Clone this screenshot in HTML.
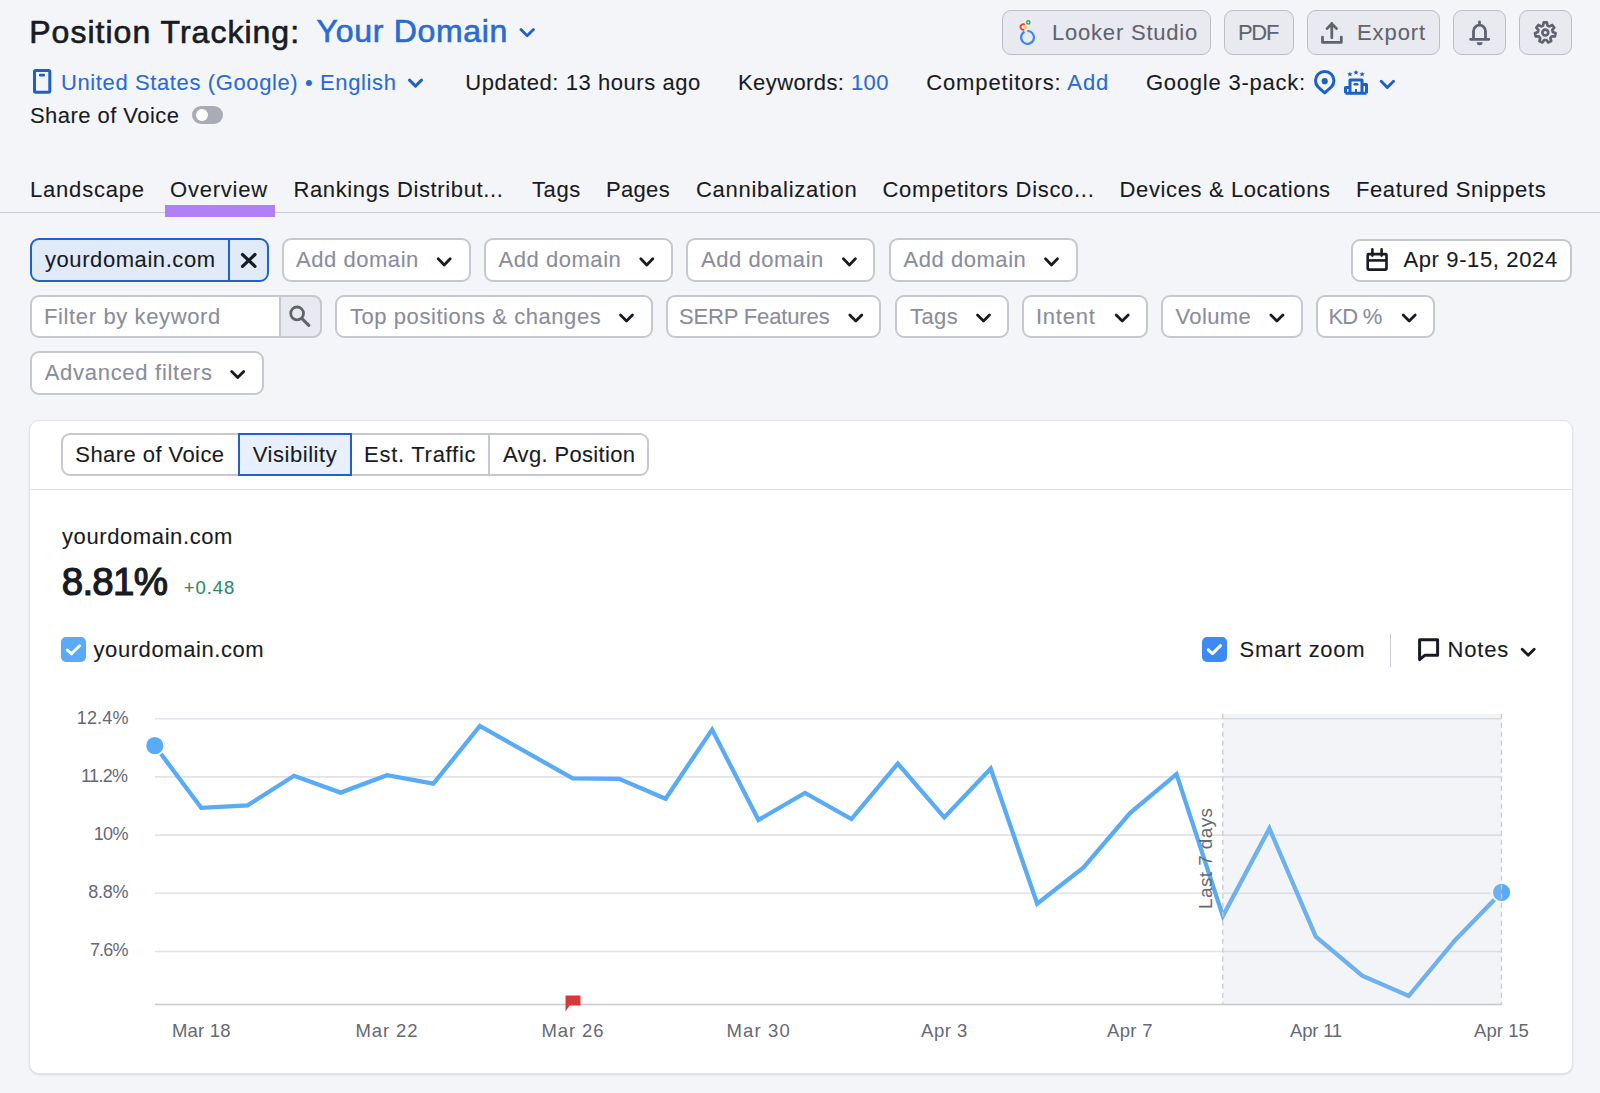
<!DOCTYPE html>
<html><head><meta charset="utf-8"><style>
html,body{margin:0;padding:0}
body{width:1600px;height:1093px;overflow:hidden;position:relative;background:#f4f5f9;font-family:"Liberation Sans",sans-serif}
.t{position:absolute;white-space:pre;line-height:1;-webkit-text-stroke:0.1px currentColor}
.b{position:absolute;box-sizing:border-box}
svg{position:absolute;left:0;top:0;overflow:visible}
</style></head><body>

<div class="b" style="left:1001.8px;top:10.3px;width:209.4px;height:44.7px;background:#e9eaef;border:1.8px solid #bcbec6;border-radius:9px"></div>
<div class="b" style="left:1223.9px;top:10.3px;width:70.2px;height:44.7px;background:#e9eaef;border:1.8px solid #bcbec6;border-radius:9px"></div>
<div class="b" style="left:1306.6px;top:10.3px;width:133.7px;height:44.7px;background:#e9eaef;border:1.8px solid #bcbec6;border-radius:9px"></div>
<div class="b" style="left:1452.8px;top:10.3px;width:53.2px;height:44.7px;background:#e9eaef;border:1.8px solid #bcbec6;border-radius:9px"></div>
<div class="b" style="left:1518.6px;top:10.3px;width:53.2px;height:44.7px;background:#e9eaef;border:1.8px solid #bcbec6;border-radius:9px"></div>
<div class="b" style="left:192.4px;top:106px;width:31.0px;height:18px;background:#a9abb6;border-radius:9px"></div>
<div class="b" style="left:195.5px;top:109px;width:12.0px;height:12px;background:#fff;border-radius:50%"></div>
<div class="b" style="left:0.0px;top:211.6px;width:1600.0px;height:1.4px;background:#c9cbd2"></div>
<div class="b" style="left:164.9px;top:205.3px;width:109.8px;height:11.4px;background:#b17ff6"></div>
<div class="b" style="left:30.0px;top:238.2px;width:239.1px;height:44.0px;background:#e1eaf9;border:2px solid #1f62ca;border-radius:9px"></div>
<div class="b" style="left:228.2px;top:238.2px;width:1.7px;height:44.0px;background:#1f62ca"></div>
<div class="b" style="left:281.9px;top:238.4px;width:189.1px;height:43.8px;background:#fff;border:2px solid #c6c8cf;border-radius:9px"></div>
<div class="b" style="left:483.5px;top:238.4px;width:189.1px;height:43.8px;background:#fff;border:2px solid #c6c8cf;border-radius:9px"></div>
<div class="b" style="left:686.2px;top:238.4px;width:189.1px;height:43.8px;background:#fff;border:2px solid #c6c8cf;border-radius:9px"></div>
<div class="b" style="left:888.8px;top:238.4px;width:189.1px;height:43.8px;background:#fff;border:2px solid #c6c8cf;border-radius:9px"></div>
<div class="b" style="left:1350.6px;top:238.5px;width:221.4px;height:43.8px;background:#fff;border:2px solid #c6c8cf;border-radius:9px"></div>
<div class="b" style="left:30.0px;top:294.6px;width:291.8px;height:43.8px;background:#fff;border:2px solid #c6c8cf;border-radius:9px"></div>
<div class="b" style="left:279.0px;top:294.6px;width:42.8px;height:43.8px;background:#e9eaef;border:2px solid #c6c8cf;border-radius:0 9px 9px 0"></div>
<div class="b" style="left:334.8px;top:294.7px;width:318.0px;height:43.7px;background:#fff;border:2px solid #c6c8cf;border-radius:9px"></div>
<div class="b" style="left:665.7px;top:294.7px;width:215.7px;height:43.7px;background:#fff;border:2px solid #c6c8cf;border-radius:9px"></div>
<div class="b" style="left:894.8px;top:294.7px;width:114.3px;height:43.7px;background:#fff;border:2px solid #c6c8cf;border-radius:9px"></div>
<div class="b" style="left:1022.0px;top:294.7px;width:125.5px;height:43.7px;background:#fff;border:2px solid #c6c8cf;border-radius:9px"></div>
<div class="b" style="left:1161.2px;top:294.7px;width:141.5px;height:43.7px;background:#fff;border:2px solid #c6c8cf;border-radius:9px"></div>
<div class="b" style="left:1315.6px;top:294.7px;width:119.3px;height:43.7px;background:#fff;border:2px solid #c6c8cf;border-radius:9px"></div>
<div class="b" style="left:29.8px;top:350.6px;width:234.3px;height:44.3px;background:#fff;border:2px solid #c6c8cf;border-radius:9px"></div>
<div class="b" style="left:29.0px;top:419.7px;width:1543.7px;height:654.5px;background:#fff;border:1px solid #e2e3e8;border-radius:10px;box-shadow:0 1px 2px rgba(25,27,35,0.12)"></div>
<div class="b" style="left:30.0px;top:488.8px;width:1541.7px;height:1.5px;background:#e2e3e8"></div>
<div class="b" style="left:61.2px;top:432.6px;width:587.6px;height:43.6px;background:#fff;border:2px solid #c6c8cf;border-radius:9px"></div>
<div class="b" style="left:487.6px;top:432.6px;width:2.0px;height:43.6px;background:#c6c8cf"></div>
<div class="b" style="left:238.0px;top:432.6px;width:113.8px;height:43.6px;background:#e8f0fd;border:2px solid #1f62ca"></div>
<div class="b" style="left:1389.7px;top:634px;width:1.5px;height:32.8px;background:#c9cbd2"></div>
<div class="b" style="left:61.0px;top:637.3px;width:25.0px;height:24.7px;background:#5aabf5;border-radius:5px"></div>
<div class="b" style="left:1202.0px;top:637.2px;width:24.7px;height:24.5px;background:#3d8af7;border-radius:5px"></div>
<div class="t" style="left:29.25px;top:15.5px;font-size:32px;font-weight:400;letter-spacing:1.015px;color:#191b23;-webkit-text-stroke:0.65px currentColor;">Position Tracking:</div>
<div class="t" style="left:316.6px;top:15.4px;font-size:32px;font-weight:400;letter-spacing:0.7px;color:#2a6bd1;-webkit-text-stroke:0.65px currentColor;">Your Domain</div>
<div class="t" style="left:61.0px;top:71.6px;font-size:22px;font-weight:400;letter-spacing:0.613px;color:#2a6bd1;">United States (Google) • English</div>
<div class="t" style="left:465.3px;top:71.6px;font-size:22px;font-weight:400;letter-spacing:0.555px;color:#191b23;">Updated: 13 hours ago</div>
<div class="t" style="left:738.0px;top:71.6px;font-size:22px;font-weight:400;letter-spacing:0.408px;color:#191b23;">Keywords: <span style="color:#2a6bd1">100</span></div>
<div class="t" style="left:926.2px;top:71.6px;font-size:22px;font-weight:400;letter-spacing:0.887px;color:#191b23;">Competitors: <span style="color:#2a6bd1">Add</span></div>
<div class="t" style="left:1145.9px;top:71.6px;font-size:22px;font-weight:400;letter-spacing:0.777px;color:#191b23;">Google 3-pack:</div>
<div class="t" style="left:30.0px;top:104.5px;font-size:22px;font-weight:400;letter-spacing:0.446px;color:#191b23;">Share of Voice</div>
<div class="t" style="left:30.0px;top:178.9px;font-size:22px;font-weight:400;letter-spacing:0.8px;color:#191b23;">Landscape</div>
<div class="t" style="left:170.0px;top:178.9px;font-size:22px;font-weight:400;letter-spacing:0.786px;color:#191b23;">Overview</div>
<div class="t" style="left:293.4px;top:178.9px;font-size:22px;font-weight:400;letter-spacing:0.63px;color:#191b23;">Rankings Distribut...</div>
<div class="t" style="left:532.0px;top:178.9px;font-size:22px;font-weight:400;letter-spacing:0.6px;color:#191b23;">Tags</div>
<div class="t" style="left:606.0px;top:178.9px;font-size:22px;font-weight:400;letter-spacing:0.325px;color:#191b23;">Pages</div>
<div class="t" style="left:695.9px;top:178.9px;font-size:22px;font-weight:400;letter-spacing:0.75px;color:#191b23;">Cannibalization</div>
<div class="t" style="left:882.5px;top:178.9px;font-size:22px;font-weight:400;letter-spacing:0.695px;color:#191b23;">Competitors Disco...</div>
<div class="t" style="left:1119.6px;top:178.9px;font-size:22px;font-weight:400;letter-spacing:0.617px;color:#191b23;">Devices &amp; Locations</div>
<div class="t" style="left:1355.9px;top:178.9px;font-size:22px;font-weight:400;letter-spacing:0.625px;color:#191b23;">Featured Snippets</div>
<div class="t" style="left:1052.0px;top:21.9px;font-size:22px;font-weight:400;letter-spacing:0.792px;color:#5f6370;">Looker Studio</div>
<div class="t" style="left:1238.0px;top:21.9px;font-size:22px;font-weight:400;letter-spacing:-1.3px;color:#5f6370;">PDF</div>
<div class="t" style="left:1357.0px;top:21.9px;font-size:22px;font-weight:400;letter-spacing:0.92px;color:#5f6370;">Export</div>
<div class="t" style="left:45.0px;top:249.3px;font-size:22px;font-weight:400;letter-spacing:0.569px;color:#191b23;">yourdomain.com</div>
<div class="t" style="left:296.0px;top:249.1px;font-size:22px;font-weight:400;letter-spacing:0.544px;color:#898d9a;">Add domain</div>
<div class="t" style="left:498.5px;top:249.1px;font-size:22px;font-weight:400;letter-spacing:0.544px;color:#898d9a;">Add domain</div>
<div class="t" style="left:701.0px;top:249.1px;font-size:22px;font-weight:400;letter-spacing:0.544px;color:#898d9a;">Add domain</div>
<div class="t" style="left:903.5px;top:249.1px;font-size:22px;font-weight:400;letter-spacing:0.544px;color:#898d9a;">Add domain</div>
<div class="t" style="left:1403.4px;top:249.4px;font-size:22px;font-weight:400;letter-spacing:0.631px;color:#191b23;">Apr 9-15, 2024</div>
<div class="t" style="left:44.0px;top:306.0px;font-size:22px;font-weight:400;letter-spacing:0.625px;color:#898d9a;">Filter by keyword</div>
<div class="t" style="left:350.0px;top:306.0px;font-size:22px;font-weight:400;letter-spacing:0.555px;color:#898d9a;">Top positions &amp; changes</div>
<div class="t" style="left:678.9px;top:306.0px;font-size:22px;font-weight:400;letter-spacing:-0.142px;color:#898d9a;">SERP Features</div>
<div class="t" style="left:910.0px;top:306.0px;font-size:22px;font-weight:400;letter-spacing:0.4px;color:#898d9a;">Tags</div>
<div class="t" style="left:1036.0px;top:306.0px;font-size:22px;font-weight:400;letter-spacing:0.74px;color:#898d9a;">Intent</div>
<div class="t" style="left:1175.4px;top:306.0px;font-size:22px;font-weight:400;letter-spacing:0.4px;color:#898d9a;">Volume</div>
<div class="t" style="left:1328.4px;top:306.0px;font-size:22px;font-weight:400;letter-spacing:-0.8px;color:#898d9a;">KD %</div>
<div class="t" style="left:44.7px;top:361.8px;font-size:22px;font-weight:400;letter-spacing:0.713px;color:#898d9a;">Advanced filters</div>
<div class="t" style="left:75.3px;top:444.0px;font-size:22px;font-weight:400;letter-spacing:0.438px;color:#191b23;">Share of Voice</div>
<div class="t" style="left:252.7px;top:444.0px;font-size:22px;font-weight:400;letter-spacing:0.544px;color:#191b23;">Visibility</div>
<div class="t" style="left:364.0px;top:444.0px;font-size:22px;font-weight:400;letter-spacing:0.727px;color:#191b23;">Est. Traffic</div>
<div class="t" style="left:503.0px;top:444.0px;font-size:22px;font-weight:400;letter-spacing:0.333px;color:#191b23;">Avg. Position</div>
<div class="t" style="left:62.0px;top:525.8px;font-size:22px;font-weight:400;letter-spacing:0.6px;color:#191b23;">yourdomain.com</div>
<div class="t" style="left:61.75px;top:562.5px;font-size:38.5px;font-weight:400;letter-spacing:-0.75px;color:#191b23;-webkit-text-stroke:1.2px currentColor;">8.81%</div>
<div class="t" style="left:183.7px;top:578.75px;font-size:18.5px;font-weight:400;letter-spacing:0.95px;color:#2f8a63;">+0.48</div>
<div class="t" style="left:93.5px;top:638.75px;font-size:22px;font-weight:400;letter-spacing:0.577px;color:#191b23;">yourdomain.com</div>
<div class="t" style="left:1239.6px;top:638.75px;font-size:22px;font-weight:400;letter-spacing:0.711px;color:#191b23;">Smart zoom</div>
<div class="t" style="left:1447.4px;top:638.75px;font-size:22px;font-weight:400;letter-spacing:0.85px;color:#191b23;">Notes</div>
<div class="t" style="left:76.8px;top:709.0px;font-size:18px;font-weight:400;letter-spacing:0.15px;color:#656974;-webkit-text-stroke:0;">12.4%</div>
<div class="t" style="left:81.1px;top:767.1px;font-size:18px;font-weight:400;letter-spacing:-0.675px;color:#656974;-webkit-text-stroke:0;">11.2%</div>
<div class="t" style="left:93.7px;top:825.2px;font-size:18px;font-weight:400;letter-spacing:-0.65px;color:#656974;-webkit-text-stroke:0;">10%</div>
<div class="t" style="left:88.3px;top:883.2px;font-size:18px;font-weight:400;letter-spacing:-0.3px;color:#656974;-webkit-text-stroke:0;">8.8%</div>
<div class="t" style="left:89.9px;top:941.3px;font-size:18px;font-weight:400;letter-spacing:-0.833px;color:#656974;-webkit-text-stroke:0;">7.6%</div>
<div class="t" style="left:171.9px;top:1022.3px;font-size:18.5px;font-weight:400;letter-spacing:0.22px;color:#656974;-webkit-text-stroke:0;">Mar 18</div>
<div class="t" style="left:355.4px;top:1022.3px;font-size:18.5px;font-weight:400;letter-spacing:0.92px;color:#656974;-webkit-text-stroke:0;">Mar 22</div>
<div class="t" style="left:541.4px;top:1022.3px;font-size:18.5px;font-weight:400;letter-spacing:0.92px;color:#656974;-webkit-text-stroke:0;">Mar 26</div>
<div class="t" style="left:726.6px;top:1022.3px;font-size:18.5px;font-weight:400;letter-spacing:1.1px;color:#656974;-webkit-text-stroke:0;">Mar 30</div>
<div class="t" style="left:921.1px;top:1022.3px;font-size:18.5px;font-weight:400;letter-spacing:0.475px;color:#656974;-webkit-text-stroke:0;">Apr 3</div>
<div class="t" style="left:1107.1px;top:1022.3px;font-size:18.5px;font-weight:400;letter-spacing:0.325px;color:#656974;-webkit-text-stroke:0;">Apr 7</div>
<div class="t" style="left:1290.0px;top:1022.3px;font-size:18.5px;font-weight:400;letter-spacing:-0.2px;color:#656974;-webkit-text-stroke:0;">Apr 11</div>
<div class="t" style="left:1474.0px;top:1022.3px;font-size:18.5px;font-weight:400;letter-spacing:0.06px;color:#656974;-webkit-text-stroke:0;">Apr 15</div>
<svg width="1600" height="1093" viewBox="0 0 1600 1093"><polyline points="409.5,80.1 415.5,86.1 421.5,80.1" fill="none" stroke="#1d61c8" stroke-width="3" stroke-linecap="round" stroke-linejoin="round"/><polyline points="1381.2,81.3 1387.35,87.5 1393.5,81.3" fill="none" stroke="#1d61c8" stroke-width="3" stroke-linecap="round" stroke-linejoin="round"/><polyline points="438.20,258.8 444.20,264.9 450.20,258.8" fill="none" stroke="#191b23" stroke-width="2.8" stroke-linecap="round" stroke-linejoin="round"/><polyline points="640.80,258.8 646.80,264.9 652.80,258.8" fill="none" stroke="#191b23" stroke-width="2.8" stroke-linecap="round" stroke-linejoin="round"/><polyline points="843.40,258.8 849.40,264.9 855.40,258.8" fill="none" stroke="#191b23" stroke-width="2.8" stroke-linecap="round" stroke-linejoin="round"/><polyline points="1045.50,258.8 1051.50,264.9 1057.50,258.8" fill="none" stroke="#191b23" stroke-width="2.8" stroke-linecap="round" stroke-linejoin="round"/><polyline points="620.50,315 626.50,321 632.50,315" fill="none" stroke="#191b23" stroke-width="2.8" stroke-linecap="round" stroke-linejoin="round"/><polyline points="849.80,315 855.80,321 861.80,315" fill="none" stroke="#191b23" stroke-width="2.8" stroke-linecap="round" stroke-linejoin="round"/><polyline points="977.50,315 983.50,321 989.50,315" fill="none" stroke="#191b23" stroke-width="2.8" stroke-linecap="round" stroke-linejoin="round"/><polyline points="1116.20,315 1122.20,321 1128.20,315" fill="none" stroke="#191b23" stroke-width="2.8" stroke-linecap="round" stroke-linejoin="round"/><polyline points="1270.90,315 1276.90,321 1282.90,315" fill="none" stroke="#191b23" stroke-width="2.8" stroke-linecap="round" stroke-linejoin="round"/><polyline points="1403.20,315 1409.20,321 1415.20,315" fill="none" stroke="#191b23" stroke-width="2.8" stroke-linecap="round" stroke-linejoin="round"/><polyline points="231.70,371.4 237.70,377.5 243.70,371.4" fill="none" stroke="#191b23" stroke-width="2.8" stroke-linecap="round" stroke-linejoin="round"/><polyline points="1522.20,649.2 1528.20,655.2 1534.20,649.2" fill="none" stroke="#191b23" stroke-width="2.8" stroke-linecap="round" stroke-linejoin="round"/><polyline points="520.90,29.6 527.20,35.7 533.50,29.6" fill="none" stroke="#1d61c8" stroke-width="2.8" stroke-linecap="round" stroke-linejoin="round"/><rect x="34.5" y="70.5" width="15.3" height="21.7" rx="1.2" fill="none" stroke="#1d61c8" stroke-width="3"/><rect x="39" y="73.8" width="6" height="2.6" rx="1" fill="#1d61c8"/><path d="M1324.7 92.9 L1318.0 86.9 A9.2 9.2 0 1 1 1331.4 86.9 Z" fill="none" stroke="#1d61c8" stroke-width="3" stroke-linejoin="round"/><circle cx="1324.7" cy="81.2" r="3.1" fill="#1d61c8"/><path d="M1350 93.25 V79.9 H1362 V93.25 M1345.5 93.25 V87.6 H1350 M1362 84.5 H1366.5 V93.25 M1345.5 93.25 H1366.5" fill="none" stroke="#1d61c8" stroke-width="3" stroke-linejoin="round"/><rect x="1353.5" y="83" width="5" height="2.4" rx="1.2" fill="#1d61c8"/><rect x="1355" y="89" width="2" height="4" fill="#1d61c8"/><polygon points="1349.90,71.50 1350.64,73.28 1352.56,73.43 1351.10,74.69 1351.55,76.57 1349.90,75.56 1348.25,76.57 1348.70,74.69 1347.24,73.43 1349.16,73.28" fill="#1d61c8"/><polygon points="1356.00,69.80 1356.74,71.58 1358.66,71.73 1357.20,72.99 1357.65,74.87 1356.00,73.86 1354.35,74.87 1354.80,72.99 1353.34,71.73 1355.26,71.58" fill="#1d61c8"/><polygon points="1362.10,71.50 1362.84,73.28 1364.76,73.43 1363.30,74.69 1363.75,76.57 1362.10,75.56 1360.45,76.57 1360.90,74.69 1359.44,73.43 1361.36,73.28" fill="#1d61c8"/><path d="M1024.5 31.75 A6.4 6.4 0 1 0 1027.3 31.0" fill="none" stroke="#4285f4" stroke-width="2.2"/><path d="M1024.9 24.9 A2.7 2.7 0 1 0 1024.3 29.5" fill="none" stroke="#ea4335" stroke-width="1.8"/><circle cx="1028.3" cy="22.4" r="1.6" fill="none" stroke="#34a853" stroke-width="1.4"/><ellipse cx="1025.6" cy="27.4" rx="1.1" ry="1.9" fill="#fbbc04"/><path d="M1322.5 37.2 V42.4 H1341.3 V37.2 M1331.8 37.8 V23.5 M1327 28.6 L1331.8 23.6 L1336.6 28.6" fill="none" stroke="#5f6370" stroke-width="2.8" stroke-linecap="round" stroke-linejoin="round"/><path d="M1473.5 39 V31.2 A6 6 0 0 1 1485.5 31.2 V39 M1470.6 39.3 H1488.8 M1479.5 22 V24.5" fill="none" stroke="#5f6370" stroke-width="2.8" stroke-linecap="round"/><path d="M1476.7 42.3 H1482.6 A2.95 2.95 0 0 1 1476.7 42.3 Z" fill="#5f6370"/><path d="M1543.11 25.43 L1543.69 22.43 L1546.91 22.43 L1547.49 25.43 L1549.54 26.41 L1552.25 25.00 L1554.26 27.52 L1552.27 29.84 L1552.78 32.06 L1555.58 33.29 L1554.86 36.43 L1551.80 36.33 L1550.39 38.11 L1551.17 41.07 L1548.26 42.46 L1546.44 40.01 L1544.16 40.01 L1542.34 42.46 L1539.43 41.07 L1540.21 38.11 L1538.80 36.33 L1535.74 36.43 L1535.02 33.29 L1537.82 32.06 L1538.33 29.84 L1536.34 27.52 L1538.35 25.00 L1541.06 26.41 Z" fill="none" stroke="#5f6370" stroke-width="2.7" stroke-linejoin="round"/><circle cx="1545.3" cy="32.6" r="2.9" fill="none" stroke="#5f6370" stroke-width="2.7"/><path d="M242.5 254.5 L255 266.3 M255 254.5 L242.5 266.3" stroke="#191b23" stroke-width="3.2" stroke-linecap="round"/><rect x="1367.7" y="254.1" width="18.8" height="15.5" rx="0.8" fill="none" stroke="#191b23" stroke-width="2.6"/><rect x="1367" y="259.1" width="20" height="2.6" fill="#191b23"/><path d="M1372.4 249.3 V255.6 M1381.6 249.3 V255.6" stroke="#191b23" stroke-width="2.6" stroke-linecap="round"/><circle cx="297.1" cy="313.4" r="6.4" fill="none" stroke="#5f6370" stroke-width="2.8"/><path d="M302 318.6 L308.8 325.4" stroke="#5f6370" stroke-width="3" stroke-linecap="round"/><path d="M67.3 650 L71.5 653.8 L79.6 645.8" fill="none" stroke="#fff" stroke-width="3" stroke-linecap="round" stroke-linejoin="round"/><path d="M1208.3 649.8 L1212.5 653.6 L1220.5 645.6" fill="none" stroke="#fff" stroke-width="3" stroke-linecap="round" stroke-linejoin="round"/><path d="M1419.6 639.8 H1437.6 V655.2 H1425 L1419.6 659.6 Z" fill="none" stroke="#191b23" stroke-width="3" stroke-linejoin="round"/><line x1="155" y1="718.7" x2="1501.5" y2="718.7" stroke="#e2e3e8" stroke-width="1.6"/><line x1="155" y1="776.9000000000001" x2="1501.5" y2="776.9000000000001" stroke="#e2e3e8" stroke-width="1.6"/><line x1="155" y1="835.1" x2="1501.5" y2="835.1" stroke="#e2e3e8" stroke-width="1.6"/><line x1="155" y1="893.3000000000001" x2="1501.5" y2="893.3000000000001" stroke="#e2e3e8" stroke-width="1.6"/><line x1="155" y1="951.5" x2="1501.5" y2="951.5" stroke="#e2e3e8" stroke-width="1.6"/><line x1="155" y1="1004.5" x2="1501.5" y2="1004.5" stroke="#c6c8cf" stroke-width="1.6"/><path d="M154.8 745.6 L201.2 807.9 L247.7 805.3 L294.1 775.8 L340.6 792.6 L387.0 775.2 L433.4 783.7 L479.9 726.0 L526.3 752.2 L572.8 778.4 L619.2 778.8 L665.6 798.7 L712.1 729.6 L758.5 819.9 L805.0 793.0 L851.4 819.1 L897.8 763.6 L944.3 817.4 L990.7 768.6 L1037.2 903.6 L1083.6 867.5 L1130.0 813.0 L1176.5 774.2 L1222.9 916.1 L1269.4 828.5 L1315.8 936.6 L1362.2 975.6 L1408.7 996.0 L1455.1 940.2 L1501.6 892.3" fill="none" stroke="#5aabf5" stroke-width="4.3" stroke-linejoin="miter" stroke-miterlimit="10"/><circle cx="154.8" cy="745.6" r="9.6" fill="#5aabf5" stroke="#fff" stroke-width="2"/><circle cx="1501.6" cy="892.3" r="9.6" fill="#5aabf5" stroke="#fff" stroke-width="2"/><rect x="1222.8" y="713.8" width="278.7" height="290.7" fill="rgba(195,200,215,0.2)"/><line x1="1222.8" y1="713.8" x2="1222.8" y2="1004.5" stroke="#c9cbd2" stroke-width="1.3" stroke-dasharray="5 4"/><line x1="1501.5" y1="713.8" x2="1501.5" y2="1004.5" stroke="#c9cbd2" stroke-width="1.3" stroke-dasharray="5 4"/><path d="M565.5 995.6 H580.5 V1005.5 H569.5 L565.5 1011.5 Z" fill="#d9383a"/></svg>
<div class="t" style="left:1195.9px;top:909.2px;font-size:19px;font-weight:400;letter-spacing:0.39px;color:#656974;transform:rotate(-90deg);transform-origin:0 0;-webkit-text-stroke:0">Last 7 days</div>
</body></html>
